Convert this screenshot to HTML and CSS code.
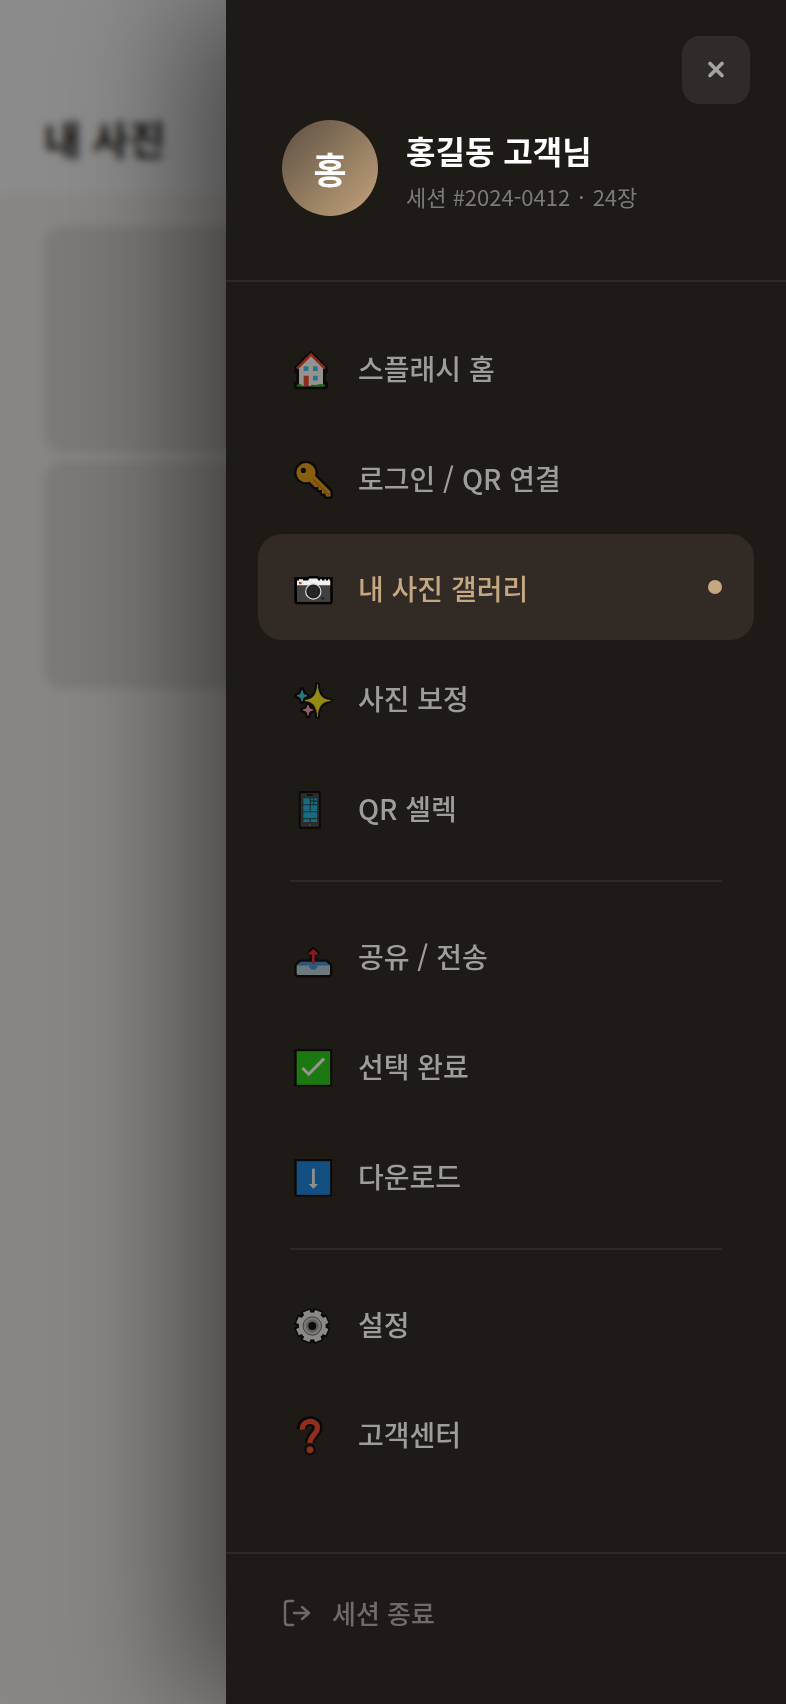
FILE: index.html
```html
<!DOCTYPE html>
<html lang="ko">
<head>
    <meta charset="UTF-8">
    <meta name="viewport" content="width=device-width, initial-scale=1.0">
    <title>내 사진</title>
    <link rel="stylesheet" href="styles.css">
</head>
<body>
    <main class="page">
        <header class="page-header">
            <h1>내 사진</h1>
        </header>
        <div class="gallery">
            <div class="photo"></div>
            <div class="photo"></div>
            <div class="photo"></div>
            <div class="photo"></div>
            <div class="photo"></div>
            <div class="photo"></div>
        </div>
    </main>

    <div class="backdrop"></div>

    <aside class="drawer">
        <button class="close-btn" type="button" aria-label="닫기">
            <svg width="20" height="20" viewBox="0 0 20 20"><path d="M4 3.5L16 15.5M16 3.5L4 15.5"/></svg>
        </button>

        <div class="profile">
            <div class="avatar">홍</div>
            <div class="profile-info">
                <div class="profile-name">홍길동 고객님</div>
                <div class="profile-session">세션 #2024-0412 <span class="sep">·</span> 24장</div>
            </div>
        </div>

        <nav class="menu">
            <a class="menu-item" href="#">
                <svg class="menu-icon" viewBox="0 0 48 48">
                    <path d="M21 11L35 25V28H33V41H35.5V43.5H6.5V41H9V28H7V25Z" fill="#000" stroke="#000" stroke-width="5.5" stroke-linejoin="round"/>
                    <path d="M9 43.3V24L21 12L33 24V43.3Z" fill="#e6e2e2"/>
                    <path d="M7 25.6L21 11.6L35 25.6" fill="none" stroke="#d8351c" stroke-width="2.6"/>
                    <path d="M13.7 23.3h4.7v4.7h-4.7zM23 23.3h4.7v4.7H23zM23 32.7h4.7v4.7H23z" fill="#30b0d8"/>
                    <path d="M13.7 32.7h5v10.6h-5z" fill="#d83a1c"/>
                    <path d="M6.7 43.5v-1.8l3-.8 2.6 1v1.6zM19.5 43.5l2-1.8 4 .2 5-.8 4.5.6v1.8z" fill="#16a010"/>
                </svg>
                <span class="menu-label">스플래시 홈</span>
            </a>
            <a class="menu-item" href="#">
                <svg class="menu-icon" viewBox="0 0 48 48">
                    <g fill="#d28c0c">
                        <g stroke="#000" stroke-width="5" stroke-linejoin="round">
                            <circle cx="16" cy="19.7" r="9.4"/>
                            <path d="M24 22L40.5 38.5V43.5H36L35.5 40.5H32V37H28.5V34H25L18 27Z"/>
                        </g>
                        <circle cx="16" cy="19.7" r="9.6"/>
                        <path d="M24 22L40.5 38.5V43.5H36L35.5 40.5H32V37H28.5V34H25L18 27Z"/>
                    </g>
                    <path d="M23 26.5L39 42" stroke="#a06808" stroke-width="1.2"/>
                    <circle cx="13.3" cy="17.4" r="2.6" fill="#000"/>
                </svg>
                <span class="menu-label">로그인 / QR 연결</span>
            </a>
            <a class="menu-item active" href="#" aria-current="page">
                <svg class="menu-icon" viewBox="0 0 48 48">
                    <path d="M4.3 14H18L19 13H28L29 14H42.7V39L41 41.2H6L4.3 39Z" fill="#000"/>
                    <path d="M7 22H40.3V39H7Z" fill="#404040"/>
                    <path d="M7 17.5H9V16.3H13V17.5H18L19.5 15.5H27L28.5 17.5H30V16.3H32V17.5H34.5V16.3H36V17.5H38V16.3H39.5V17.5H40.3V22.3H7Z" fill="#f0f0f0"/>
                    <path d="M9 18.8h2.6v2.4H9z" fill="#f03818"/>
                    <circle cx="23.3" cy="28.5" r="7.6" fill="#282828" stroke="#d8d8d8" stroke-width="1.2"/>
                    <circle cx="23.3" cy="28.5" r="5.6" fill="#262626" stroke="#181818"/>
                    <circle cx="23.5" cy="28.5" r=".7" fill="#101010"/>
                    <circle cx="32.8" cy="35.4" r="1.2" fill="#181818"/>
                </svg>
                <span class="menu-label">내 사진 갤러리</span>
                <span class="menu-dot"></span>
            </a>
            <a class="menu-item" href="#">
                <svg class="menu-icon" viewBox="0 0 48 48">
                    <g stroke="#000" stroke-width="5" stroke-linejoin="round">
                        <path d="M27.5 11.8Q28 26.5 40 27.5Q28 28.5 27.5 43.5Q27 28.5 15 27.5Q27 26.5 27.5 11.8Z"/>
                        <path d="M12 16.5Q12.5 22 17.5 22.7Q12.5 23.4 12 29Q11.5 23.4 6.5 22.7Q11.5 22 12 16.5Z"/>
                        <path d="M18 31.5Q18.5 36.3 23.5 37Q18.5 37.7 18 43Q17.5 37.7 12.5 37Q17.5 36.3 18 31.5Z"/>
                    </g>
                    <path d="M27.5 11.5C28 20 31 26.5 40.3 27.3V27.8C31 28.5 28 35 27.5 43.7C27 35 24 28.5 15 27.8V27.3C24 26.5 27 20 27.5 11.5Z" fill="#e4d414" stroke="#e4d414" stroke-width=".6"/>
                    <path d="M12 17.3Q12.3 22.4 17 22.7Q12.3 23 12 28.3Q11.7 23 7 22.7Q11.7 22.4 12 17.3Z" fill="#36b4d0" stroke="#36b4d0" stroke-width="1.2"/>
                    <path d="M18 32Q18.3 36.7 23 37Q18.3 37.3 18 42.5Q17.7 37.3 13 37Q17.7 36.7 18 32Z" fill="#e08aa4" stroke="#e08aa4" stroke-width="1.2"/>
                </svg>
                <span class="menu-label">사진 보정</span>
            </a>
            <a class="menu-item" href="#">
                <svg class="menu-icon" viewBox="0 0 48 48">
                    <rect x="8.7" y="8" width="22.2" height="38" rx="2" fill="#000"/>
                    <rect x="10.8" y="10.3" width="18" height="33.4" rx="1" fill="#3c3c3c"/>
                    <rect x="17" y="11" width="6" height="2" fill="#101010"/>
                    <rect x="12.5" y="14.6" width="15.2" height="24.6" fill="#202a2c"/>
                    <path d="M13.3 15.2h6.4v6h-6.4zM20.8 15.2h2.4v2.2h-2.4zM24.2 15.2h3v2.2h-3zM20.8 18.8h2.4v2.4h-2.4zM24.2 18.8h3v2.4h-3zM13.3 22.2h6.4v6h-6.4zM20.6 22.2h6.6v6h-6.6zM13.3 29.2h13.9v6H13.3zM13.3 36.2h6.4v2.8h-6.4zM20.8 36.2h6.4v2.8h-6.4z" fill="#0ea4c8"/>
                    <circle cx="20" cy="42" r="1" fill="#666"/>
                </svg>
                <span class="menu-label">QR 셀렉</span>
            </a>
            <hr class="menu-divider">
            <a class="menu-item" href="#">
                <svg class="menu-icon" viewBox="0 0 48 48">
                    <path d="M10.5 31H22V22H20L23.3 18.5L27 22H25V31H36L40 34.3V43L39 44H7.7L6.7 43V34.3Z" stroke="#000" stroke-width="5" stroke-linejoin="round"/>
                    <path d="M10.5 30.8H36L40 34.3H6.7Z" fill="#3880bc"/>
                    <path d="M6.7 34.3H40V43L39 44H7.7L6.7 43Z" fill="#a0b8c4"/>
                    <path d="M18.8 34.2a4.5 4.5 0 0 0 9 0z" fill="#3880bc"/>
                    <path d="M22 33V23.4H18.6V22.6L23.3 18L28 22.6V23.4H24.6V33Z" fill="#d01c2c"/>
                </svg>
                <span class="menu-label">공유 / 전송</span>
            </a>
            <a class="menu-item" href="#">
                <svg class="menu-icon" viewBox="0 0 48 48">
                    <rect x="4.2" y="8" width="38" height="37.6"/>
                    <rect x="6.7" y="10.2" width="33.4" height="33.6" fill="#1cb80e"/>
                    <path d="M12.5 27L18.7 33.2L34 17.6" fill="none" stroke="#e8e4e4" stroke-width="3"/>
                </svg>
                <span class="menu-label">선택 완료</span>
            </a>
            <a class="menu-item" href="#">
                <svg class="menu-icon" viewBox="0 0 48 48">
                    <rect x="4.2" y="8" width="38" height="37.6"/>
                    <rect x="6.7" y="10.2" width="33.4" height="33.6" fill="#0c72c8"/>
                    <path d="M22 18.5L23.4 17L24.8 18.5V33H28L23.4 37.7L18.8 33H22Z" fill="#dcdcdc"/>
                </svg>
                <span class="menu-label">다운로드</span>
            </a>
            <hr class="menu-divider">
            <a class="menu-item" href="#">
                <svg class="menu-icon" viewBox="0 0 48 48">
                    <circle cx="22.3" cy="27" r="14" stroke="#000" stroke-width="4.5"/>
                    <path d="M22.3 9.4V44.6M4.7 27H39.9M9.9 14.6L34.7 39.4M34.7 14.6L9.9 39.4" stroke="#000" stroke-width="11" transform="rotate(22.5 22.3 27)"/>
                    <path d="M22.3 11V43M6.3 27H38.3M11 15.7L33.6 38.3M33.6 15.7L11 38.3" stroke="#d4d2ce" stroke-width="7" transform="rotate(22.5 22.3 27)"/>
                    <circle cx="22.3" cy="27" r="13.4" fill="#d4d2ce"/>
                    <circle cx="22.3" cy="27" r="9.2" fill="#b8b6b4" stroke="#585654" stroke-width="1"/>
                    <circle cx="22.3" cy="27" r="5.2" fill="#000" stroke="#8c8a88" stroke-width="2.4"/>
                </svg>
                <span class="menu-label">설정</span>
            </a>
            <a class="menu-item" href="#">
                <svg class="menu-icon" viewBox="0 0 48 48">
                    <g fill="none" stroke="#000" stroke-width="10" stroke-linejoin="round">
                        <path d="M11.5 20.2C11.5 9.6 27.5 9.6 27.5 18.5C27.5 24.5 20 26.5 20 34"/>
                        <circle cx="20" cy="40.6" r=".8"/>
                    </g>
                    <path d="M12.4 20.6C11.8 10 27.4 9.8 27.4 18.7C27.4 24.7 20 26.5 20 34" fill="none" stroke="#e03a20" stroke-width="5.2"/>
                    <circle cx="20" cy="40.7" r="3.2" fill="#e03a20"/>
                </svg>
                <span class="menu-label">고객센터</span>
            </a>
        </nav>

        <div class="drawer-footer">
            <button class="logout-btn" type="button">
                <svg width="30" height="30" viewBox="0 0 30 30"><path d="M11 3H6Q3 3 3 6V24Q3 27 6 27H11M12 15H27M20 9L27 15L20 21"/></svg>
                <span>세션 종료</span>
            </button>
        </div>
    </aside>
</body>
</html>
```

FILE: styles.css
```css
* {
    box-sizing: border-box;
}
body {
    margin: 0;
    min-height: 100vh;
    background: #f9f6f3;
    font-family: "Noto Sans CJK KR", sans-serif;
    overflow: hidden;
}
.page-header {
    background: #fff;
    padding: 108px 44px 26px;
}
.page-header h1 {
    margin: 0;
    font-size: 40px;
    line-height: 60px;
    font-weight: 700;
    color: #1e1b16;
}
.gallery {
    display: grid;
    grid-template-columns: repeat(3, 1fr);
    gap: 8px;
    padding: 32px 44px;
}
.photo {
    aspect-ratio: 1;
    border-radius: 20px;
    background: #e3e0d8;
}
.backdrop {
    position: fixed;
    inset: 0;
    background: rgba(0, 0, 0, 0.45);
    backdrop-filter: blur(4px);
}

/* drawer */
.drawer {
    position: fixed;
    top: 0;
    right: 0;
    bottom: 0;
    width: 560px;
    max-width: 100%;
    display: flex;
    flex-direction: column;
    background: #1e1b16;
    box-shadow: -40px 0 120px rgba(0, 0, 0, 0.5);
}
.close-btn {
    position: absolute;
    top: 36px;
    right: 36px;
    width: 68px;
    height: 68px;
    display: flex;
    align-items: center;
    justify-content: center;
    padding: 0;
    border: none;
    border-radius: 18px;
    background: rgba(255, 255, 255, 0.08);
    cursor: pointer;
}
.close-btn svg {
    fill: none;
    stroke: #a5a4a2;
    stroke-width: 3.6;
    stroke-linecap: round;
}
.profile {
    display: flex;
    align-items: center;
    gap: 28px;
    padding: 120px 56px 64px;
    border-bottom: 2px solid #2d2a26;
}
.avatar {
    width: 96px;
    height: 96px;
    display: flex;
    align-items: center;
    justify-content: center;
    border-radius: 50%;
    background: linear-gradient(135deg, #5c4f42, #c4a47c);
    color: #fff;
    font-size: 36px;
    font-weight: 700;
}
.profile-info {
    display: flex;
    flex-direction: column;
    gap: 5px;
    padding-top: 3px;
}
.profile-name {
    font-size: 32px;
    line-height: 48px;
    font-weight: 700;
    color: #fff;
}
.profile-session {
    font-size: 22px;
    line-height: 34px;
    color: #7c7a77;
}
.sep {
    margin: 0 2px;
}

/* menu */
.menu {
    flex: 1;
    display: flex;
    flex-direction: column;
    gap: 4px;
    padding: 32px;
}
.menu-item {
    display: flex;
    align-items: center;
    gap: 20px;
    padding: 27px 32px;
    border-radius: 24px;
    color: #9f9d9b;
    font-size: 28px;
    line-height: 50px;
    font-weight: 500;
    text-decoration: none;
}
.menu-icon {
    width: 48px;
    height: 48px;
    opacity: 0.6;
}
.menu-label {
    flex: 1;
    padding-top: 2px;
}
.menu-item.active {
    background: #322a24;
    color: #c4a882;
}
.menu-item.active .menu-icon {
    opacity: 1;
}
.menu-dot {
    width: 14px;
    height: 14px;
    border-radius: 50%;
    background: #c4a882;
}
.menu-divider {
    align-self: stretch;
    height: 2px;
    margin: 16px 32px;
    border: none;
    background: #2d2a26;
}

.drawer-footer {
    padding: 40px 56px 72px;
    border-top: 2px solid #2d2a26;
}
.logout-btn {
    display: flex;
    align-items: center;
    gap: 20px;
    padding: 0;
    border: none;
    background: none;
    color: #6e6b68;
    font-family: inherit;
    font-size: 26px;
    font-weight: 500;
    line-height: 38px;
    cursor: pointer;
}
.logout-btn svg {
    fill: none;
    stroke: currentColor;
    stroke-width: 2.4;
    stroke-linecap: round;
    stroke-linejoin: round;
}
```
